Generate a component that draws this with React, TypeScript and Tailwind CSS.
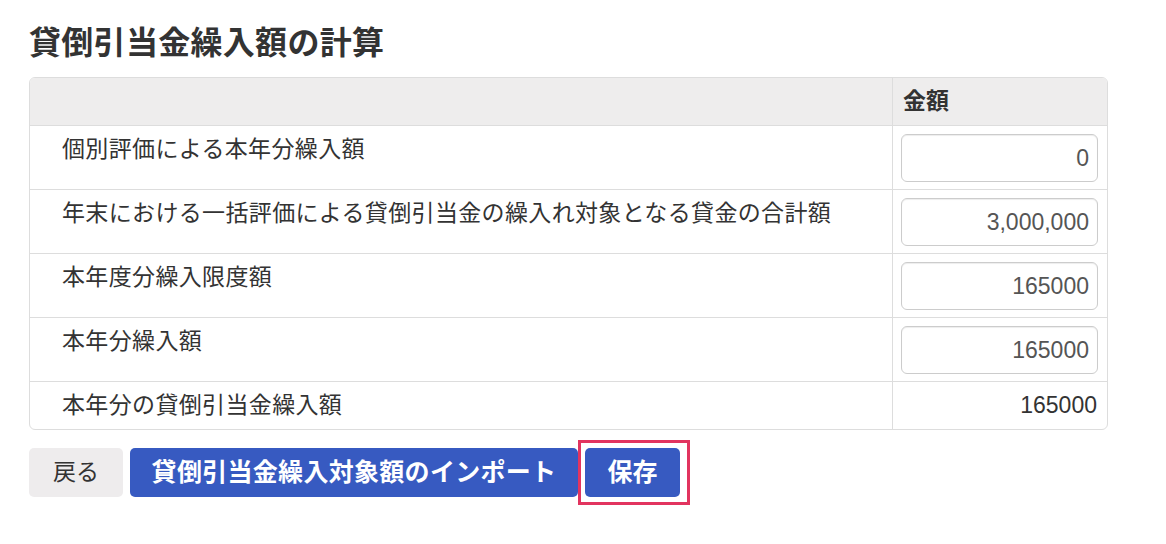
const rows = [
  { label: "個別評価による本年分繰入額", value: "0", input: true },
  { label: "年末における一括評価による貸倒引当金の繰入れ対象となる貸金の合計額", value: "3,000,000", input: true },
  { label: "本年度分繰入限度額", value: "165000", input: true },
  { label: "本年分繰入額", value: "165000", input: true },
  { label: "本年分の貸倒引当金繰入額", value: "165000", input: false },
];

export default function App() {
  return (
    <div
      className="min-h-screen bg-white pl-[29px] pt-[24px] text-[#333]"
      style={{ fontFamily: '"Liberation Sans", "Noto Sans CJK JP", sans-serif' }}
    >
      <h1 className="text-[32px] font-bold leading-[38px] tracking-[0.3px] text-[#333]">貸倒引当金繰入額の計算</h1>

      <div className="mt-[15px] w-[1079px] overflow-hidden rounded-[6px] border border-[#dddddd]">
        <div className="grid grid-cols-[862px_1fr] border-b border-[#dddddd] bg-[#eeeded]">
          <div className="h-[47px]" />
          <div className="flex h-[47px] items-center border-l border-[#dddddd] px-[10px] text-[23px] font-bold">
            金額
          </div>
        </div>

        {rows.map((row, i) => (
          <div
            key={i}
            className={
              "grid grid-cols-[862px_1fr] " + (i < rows.length - 1 ? "border-b border-[#dddddd]" : "")
            }
          >
            {row.input ? (
              <>
                <div className="pl-[32px] pt-[7px] text-[23px] leading-[32px] tracking-[0.35px]">{row.label}</div>
                <div className="border-l border-[#dddddd] pb-[7px] pl-[8px] pr-[9px] pt-[8px]">
                  <input
                    readOnly
                    value={row.value}
                    className="h-[48px] w-full rounded-[6px] border border-[#cccccc] bg-white px-[8px] text-right text-[23px] text-[#555] shadow-[inset_0_1px_1px_rgba(0,0,0,0.075)] outline-none"
                  />
                </div>
              </>
            ) : (
              <>
                <div className="flex h-[47px] items-center pl-[32px] text-[23px] tracking-[0.35px]">{row.label}</div>
                <div className="flex h-[47px] items-center justify-end border-l border-[#dddddd] pr-[10px] text-[23px]">
                  {row.value}
                </div>
              </>
            )}
          </div>
        ))}
      </div>

      <div className="mt-[10px] flex items-center">
        <button className="flex h-[49px] w-[94px] items-center justify-center rounded-[5px] bg-[#eeeced] text-[23px] text-[#333]">
          戻る
        </button>
        <button className="ml-[7px] flex h-[49px] w-[448px] items-center justify-center rounded-[5px] bg-[#375ac1] text-[25px] font-bold tracking-[0.3px] text-white">
          貸倒引当金繰入対象額のインポート
        </button>
        <div className="border-[3px] border-[#e2345f] py-[5px] pl-[4px] pr-[7px]">
          <button className="flex h-[49px] w-[95px] items-center justify-center rounded-[5px] bg-[#375ac1] text-[25px] font-bold text-white">
            保存
          </button>
        </div>
      </div>
    </div>
  );
}
